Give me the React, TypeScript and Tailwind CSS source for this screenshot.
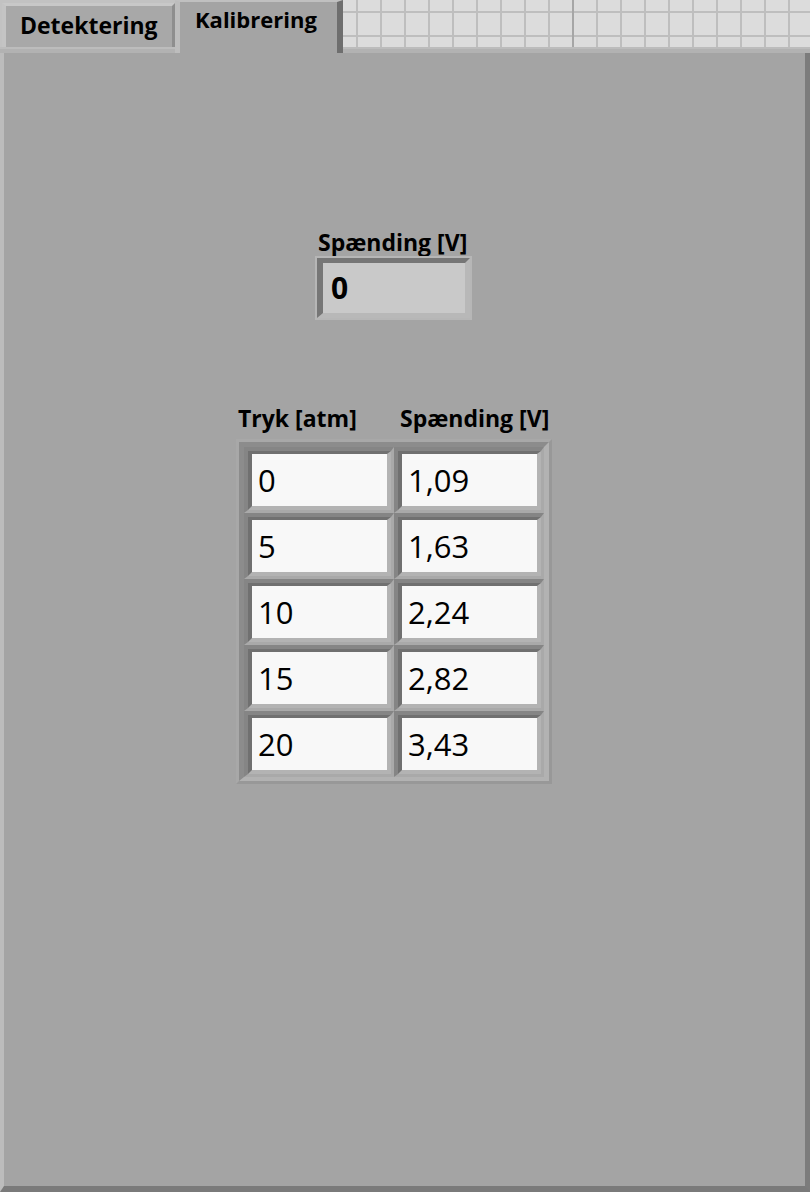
import React from 'react';

const rows = [
    ['0', '1,09'],
    ['5', '1,63'],
    ['10', '2,24'],
    ['15', '2,82'],
    ['20', '3,43'],
];

function Cell({ value }: { value: string }) {
    return (
        <div className="border-t-[4px] border-l-[4px] border-b-[3px] border-r-[3px] border-t-[#858585] border-l-[#858585] border-b-[#a9a9a9] border-r-[#a9a9a9]">
            <div className="border-t-[3px] border-l-[4px] border-b-[4px] border-r-[4px] border-t-[#707070] border-l-[#707070] border-b-[#b3b3b3] border-r-[#b3b3b3]">
                <div className="flex h-[52px] items-center bg-[#f8f8f8] pl-[6px] text-[31px] leading-none text-black">
                    {value}
                </div>
            </div>
        </div>
    );
}

export default function App() {
    return (
        <div className="flex h-[1192px] w-[810px] flex-col bg-[#a4a4a4] font-['Open_Sans',sans-serif] text-black">
            {/* tab row */}
            <div className="flex h-[53px]">
                <div className="flex w-[175px] flex-col">
                    <div className="h-[47px] bg-[#c2c2c2] pt-[3px] pl-[2px]">
                        <div className="h-[44px] border-t-[3px] border-l-[4px] border-r-[3px] border-t-[#c8c8c8] border-l-[#c4c4c4] border-r-[#8e8e8e] bg-[#a8a8a8] pl-[14px] pt-[4px] text-[23px] font-bold leading-[30px]">
                            Detektering
                        </div>
                    </div>
                    <div className="h-[6px] border-t-[2px] border-t-[#bcbcbc] bg-[#b2b2b2]" />
                </div>
                <div className="h-[53px] w-[168px] border-t-[2px] border-l-[5px] border-r-[6px] border-t-[#c0c0c0] border-l-[#bdbdbd] border-r-[#6e6e6e] bg-[#a4a4a4] pl-[15px] pt-[2px] text-[22px] font-bold leading-[30px]">
                    Kalibrering
                </div>
                <div className="flex flex-1 flex-col">
                    <div className="h-[47px] bg-[#dcdcdc] bg-[linear-gradient(to_right,transparent_229px,#a6a6a6_229px,#a6a6a6_231px,transparent_231px),linear-gradient(to_right,#bebebe_2px,transparent_2px),linear-gradient(to_bottom,#bebebe_2px,transparent_2px)] bg-[size:100%_100%,24px_24px,24px_24px] bg-[position:0_0,13px_11px,13px_11px]" />
                    <div className="h-[6px] border-t-[2px] border-t-[#bcbcbc] bg-[#b2b2b2]" />
                </div>
            </div>

            {/* panel */}
            <div className="flex flex-1 flex-col border-l-[4px] border-r-[5px] border-b-[6px] border-l-[#bcbcbc] border-r-[#7c7c7c] border-b-[#7a7a7a]">
                <div className="ml-[311px] mt-[176px] flex flex-col">
                    <div className="pl-[3px] text-[23px] font-bold leading-[27px]">Spænding [V]</div>
                    <div className="h-[64px] w-[157px] border-[2px] border-[#b6b6b6]">
                        <div className="h-full border-t-[5px] border-l-[6px] border-b-[5px] border-r-[5px] border-t-[#767676] border-l-[#767676] border-b-[#b8b8b8] border-r-[#b8b8b8]">
                            <div className="flex h-full items-center bg-[#c9c9c9] pl-[8px] text-[30px] font-bold leading-none">
                                0
                            </div>
                        </div>
                    </div>
                </div>

                <div className="ml-[232px] mt-[84px] flex w-[316px] flex-col">
                    <div className="flex text-[23px] font-bold leading-[28px]">
                        <div className="w-[158px] pl-[2px]">Tryk [atm]</div>
                        <div className="pl-[6px]">Spænding [V]</div>
                    </div>
                    <div className="mt-[7px] border-[3px] border-t-[#a8a8a8] border-l-[#a8a8a8] border-b-[#989898] border-r-[#989898]">
                        <div className="border-t-[5px] border-l-[5px] border-b-[4px] border-r-[5px] border-t-[#8c8c8c] border-l-[#8c8c8c] border-b-[#b2b2b2] border-r-[#b2b2b2] bg-[#a0a0a0]">
                            <div className="grid grid-cols-2">
                                {rows.map((r, i) => (
                                    <React.Fragment key={i}>
                                        <Cell value={r[0]} />
                                        <Cell value={r[1]} />
                                    </React.Fragment>
                                ))}
                            </div>
                        </div>
                    </div>
                </div>
            </div>
        </div>
    );
}
